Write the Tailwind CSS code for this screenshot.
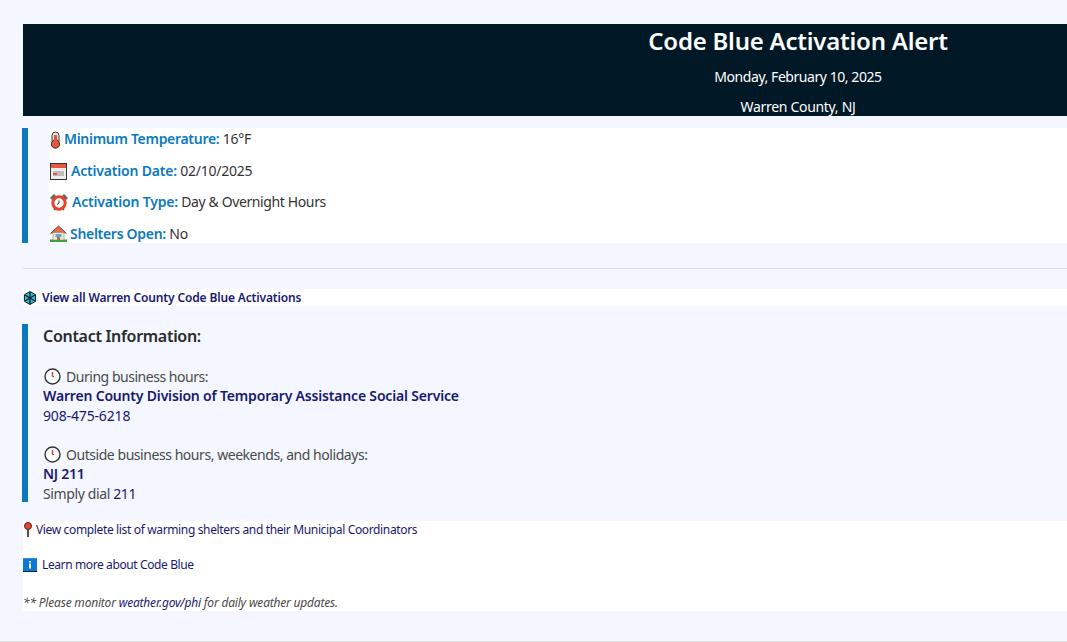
<!DOCTYPE html>
<html><head><meta charset="utf-8"><script src="https://cdn.jsdelivr.net/npm/@tailwindcss/browser@4"></script></head>
<body class="bg-[#f4f7ff] overflow-hidden h-[642px] w-[1067px] font-['Noto_Sans',sans-serif] text-[14px] text-[#333]">
<div class="w-[1067px] h-[642px] overflow-hidden border-b border-[#dddddd]">
<div class="w-[1573px] pl-[23px] pt-6 flex flex-col">
  <header class="bg-[#011826] h-[92px] text-white text-center overflow-hidden flex flex-col">
    <h1 class="text-[24px] leading-[34px] font-semibold tracking-[-0.23px]">Code Blue Activation Alert</h1>
    <p class="mt-[9px] leading-[20px] text-[14px] tracking-[-0.44px]">Monday, February 10, 2025</p>
    <p class="mt-[10px] leading-[19px] text-[14px] tracking-[-0.3px]">Warren County, NJ</p>
  </header>
  <section class="mt-3 -ml-px border-l-[6px] border-[#0b79bd] pl-[21px] h-[115px]">
    <div class="bg-white h-full flex flex-col tracking-[-0.25px]">
      <p class="h-[32px] leading-[21px] flex items-start whitespace-pre">
        <svg class="w-[14px] h-[18px] mt-[3px] mr-[1px]" viewBox="0 0 14 18"><rect x="3" y="1" width="7" height="12" rx="3.5" fill="#e6e6e6" stroke="#333"/><circle cx="6.5" cy="13" r="4.2" fill="#e8533c" stroke="#333"/><rect x="5" y="4" width="3" height="9" fill="#e8533c"/></svg><b class="font-semibold text-[#0b79bd] tracking-[-0.3px]">Minimum Temperature:</b> 16°F</p>
      <p class="h-[31px] leading-[21px] flex items-start whitespace-pre">
        <svg class="w-[17px] h-[17px] mt-[3px] ml-[1px] mr-[4px]" viewBox="0 0 17 17"><rect x=".5" y=".5" width="16" height="16" fill="#eee" stroke="#333"/><rect x="1" y="1" width="15" height="4" fill="#e4593f"/><rect x="3" y="8" width="11" height="5" fill="#bdbdbd"/><rect x="3" y="10" width="4" height="2" fill="#e4593f"/></svg><b class="font-semibold text-[#0b79bd] tracking-[-0.19px]">Activation Date:</b> 02/10/2025</p>
      <p class="h-[32px] leading-[21px] flex items-start whitespace-pre tracking-[-0.38px]">
        <svg class="w-[18px] h-[17px] mt-[3px] ml-[1px] mr-[4px]" viewBox="0 0 18 17"><path d="M1 5L5 1M17 5L13 1" stroke="#666" stroke-width="3"/><path d="M4 16l2-2M14 16l-2-2" stroke="#555" stroke-width="1.5"/><circle cx="9" cy="9" r="6.2" fill="#fff" stroke="#e4452c" stroke-width="3"/><path d="M9 6.5v2.5l-2 1.5" stroke="#333" fill="none"/></svg><b class="font-semibold text-[#0b79bd] tracking-[-0.19px]">Activation Type:</b> Day &amp; Overnight Hours</p>
      <p class="h-[20px] leading-[21px] flex items-start whitespace-pre">
        <svg class="w-[17px] h-[17px] mt-[2px] ml-[1px] mr-[3px]" viewBox="0 0 17 17"><rect x="0" y="14.5" width="17" height="2.5" fill="#35a83a"/><path d="M.5 8.5L8.5 1l8 7.5" fill="#e8674e" stroke="#6b4b3e"/><rect x="3" y="7.5" width="11" height="7.5" fill="#f4e8d0" stroke="#777" stroke-width=".5"/><rect x="5.5" y="9" width="6" height="3" fill="#42b6d8"/><rect x="7" y="12" width="3" height="3" fill="#d35b3f"/></svg><b class="font-semibold text-[#0b79bd] tracking-[-0.3px]">Shelters Open:</b> No</p>
    </div>
  </section>
  <hr class="mt-[25px] border-[#dddddd]">
  <a class="mt-5 bg-white h-[17px] flex items-center text-[12px] font-semibold text-[#191970] tracking-[-0.15px]">
    <svg class="w-[14px] h-[14px] mr-[5px]" viewBox="0 0 14 14"><path d="M7 .5L12.6 3.7V10.3L7 13.5L1.4 10.3V3.7Z" fill="#35b6c9" stroke="#123"/><path d="M7 1v12M2 4l10 6M12 4L2 10" stroke="#123" stroke-width="1.3"/></svg>View all Warren County Code Blue Activations</a>
  <section class="mt-[18px] -ml-px border-l-[6px] border-[#0b79bd] pl-[15px] h-[178px] tracking-[-0.25px]">
    <h3 class="pt-[1px] text-[16px] leading-[22px] font-semibold text-[#2b2b2b] tracking-[-0.3px]">Contact Information:</h3>
    <p class="mt-[20px] h-[19px] leading-[19px] text-[#4a4a4a] flex items-center whitespace-pre tracking-[-0.47px]"><svg class="w-[17px] h-[17px] mr-[5px] ml-[1px]" viewBox="0 0 17 17"><circle cx="8.5" cy="8.5" r="7.5" fill="#fff" stroke="#333" stroke-width="1.4"/><path d="M8.5 4v4.5" stroke="#d33" stroke-width="1.4"/><path d="M8.5 8.5h1.5" stroke="#555"/></svg>During business hours:</p>
    <p class="leading-[19px] font-semibold text-[#191970] tracking-[-0.18px]">Warren County Division of Temporary Assistance Social Service</p>
    <p class="mt-[1px] leading-[19px] text-[#191970] tracking-[-0.15px]">908-475-6218</p>
    <p class="mt-[20px] h-[19px] leading-[19px] text-[#4a4a4a] flex items-center whitespace-pre tracking-[-0.45px]"><svg class="w-[17px] h-[17px] mr-[5px] ml-[1px]" viewBox="0 0 17 17"><circle cx="8.5" cy="8.5" r="7.5" fill="#fff" stroke="#333" stroke-width="1.4"/><path d="M8.5 4v4.5" stroke="#d33" stroke-width="1.4"/><path d="M8.5 8.5h1.5" stroke="#555"/></svg>Outside business hours, weekends, and holidays:</p>
    <p class="leading-[19px] font-semibold text-[#191970]">NJ 211</p>
    <p class="mt-[1px] leading-[19px] text-[#4a4a4a] tracking-[-0.38px]">Simply dial <span class="text-[#191970]">211</span></p>
  </section>
  <div class="mt-[19px] bg-white h-[90px] text-[12px] flex flex-col">
    <a class="h-[17px] leading-[17px] text-[#191970] flex items-center tracking-[-0.355px]"><svg class="w-[10px] h-[15px] mr-[3px]" viewBox="0 0 10 15"><path d="M5 7v8" stroke="#222" stroke-width="1.6"/><circle cx="5" cy="4" r="3.5" fill="#e4452c" stroke="#522"/></svg>View complete list of warming shelters and their Municipal Coordinators</a>
    <a class="mt-[18px] h-[17px] leading-[17px] text-[#191970] flex items-center tracking-[-0.39px]"><svg class="w-[14px] h-[14px] mr-[5px]" viewBox="0 0 14 14"><rect width="14" height="14" fill="#0a78d7"/><path d="M0 13.5h14" stroke="#123"/><path d="M0 .5h14" stroke="#3a8fd8"/><rect x="6" y="3" width="2" height="1.5" fill="#fff"/><rect x="6" y="5.5" width="2" height="5" fill="#fff"/></svg>Learn more about Code Blue</a>
    <p class="mt-[21px] leading-[17px] italic text-[#4a4a4a] tracking-[-0.2px]">** Please monitor <a class="text-[#191970]">weather.gov/phi</a> for daily weather updates.</p>
  </div>
</div>
</div>
</body></html>
